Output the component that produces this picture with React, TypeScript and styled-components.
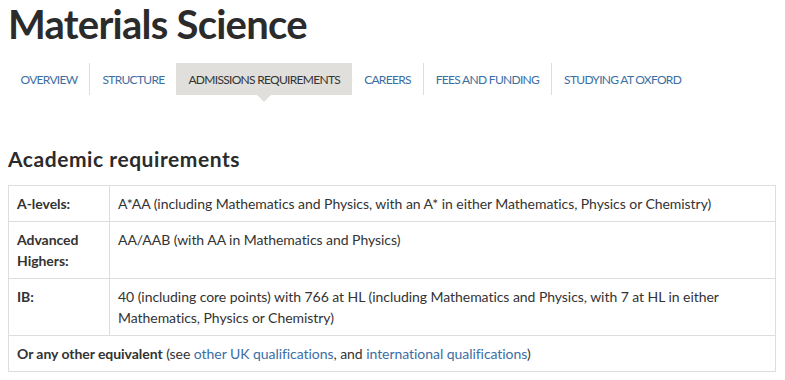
import React from 'react';
import styled, { createGlobalStyle } from 'styled-components';

const GlobalStyle = createGlobalStyle`
  html, body {
    margin: 0;
    padding: 0;
    background: #ffffff;
  }
  body {
    font-family: Lato, "Liberation Sans", sans-serif;
    color: #333333;
  }
`;

const Page = styled.div`
  width: 768px;
  margin-left: 8px;
`;

const Title = styled.h1`
  margin: 0;
  font-size: 40px;
  font-weight: 700;
  line-height: 48px;
  letter-spacing: -0.75px;
  color: #2b2b2b;
`;

const TabBar = styled.ul`
  display: flex;
  margin: 15px 0 0;
  padding: 0;
  list-style: none;
`;

const Tab = styled.li<{ $active?: boolean; $divider?: boolean }>`
  position: relative;
  display: flex;
  align-items: center;
  height: 32px;
  padding: 0 12px;
  font-size: 12px;
  letter-spacing: -0.7px;
  text-transform: uppercase;
  color: ${({ $active }) => ($active ? '#333333' : '#3b6ea3')};
  background: ${({ $active }) => ($active ? '#e0dfdb' : 'transparent')};
  border-left: ${({ $divider }) => ($divider ? '1px solid #dddddd' : 'none')};

  &:first-child {
    padding-left: 12.5px;
  }

  &::after {
    content: '';
    display: ${({ $active }) => ($active ? 'block' : 'none')};
    position: absolute;
    left: 50%;
    top: 100%;
    margin-left: -7px;
    border-left: 7px solid transparent;
    border-right: 7px solid transparent;
    border-top: 7px solid #e0dfdb;
  }
`;

const Heading = styled.h2`
  margin: 52px 0 14px;
  font-size: 21px;
  font-weight: 700;
  line-height: 24px;
  letter-spacing: 0.55px;
  color: #2b2b2b;
`;

const Table = styled.table`
  width: 100%;
  border-collapse: collapse;
  font-size: 14px;
  line-height: 21px;
  letter-spacing: -0.05px;
`;

const Label = styled.th`
  width: 84px;
  padding: 7px 8px;
  border: 1px solid #dddddd;
  text-align: left;
  vertical-align: top;
  font-weight: 700;
`;

const Cell = styled.td`
  padding: 7px 8px;
  border: 1px solid #dddddd;
  vertical-align: top;
`;

const Link = styled.a`
  color: #3b6ea3;
  text-decoration: none;
`;

const tabs = [
  'Overview',
  'Structure',
  'Admissions requirements',
  'Careers',
  'Fees and funding',
  'Studying at Oxford',
];
const activeTab = 2;

export default function App() {
  return (
    <Page>
      <GlobalStyle />
      <Title>Materials Science</Title>
      <TabBar>
        {tabs.map((t, i) => (
          <Tab
            key={t}
            $active={i === activeTab}
            $divider={i > 0 && i !== activeTab && i !== activeTab + 1}
          >
            {t}
          </Tab>
        ))}
      </TabBar>
      <Heading>Academic requirements</Heading>
      <Table>
        <tbody>
          <tr>
            <Label>A-levels:</Label>
            <Cell>
              A*AA (including Mathematics and Physics, with an A* in either Mathematics, Physics or
              Chemistry)
            </Cell>
          </tr>
          <tr>
            <Label>Advanced Highers:</Label>
            <Cell>AA/AAB (with AA in Mathematics and Physics)</Cell>
          </tr>
          <tr>
            <Label>IB:</Label>
            <Cell>
              40 (including core points) with 766 at HL (including Mathematics and Physics, with 7
              at HL in either Mathematics, Physics or Chemistry)
            </Cell>
          </tr>
          <tr>
            <Cell colSpan={2}>
              <strong>Or any other equivalent</strong> (see{' '}
              <Link href="#">other UK qualifications</Link>, and{' '}
              <Link href="#">international qualifications</Link>)
            </Cell>
          </tr>
        </tbody>
      </Table>
    </Page>
  );
}
